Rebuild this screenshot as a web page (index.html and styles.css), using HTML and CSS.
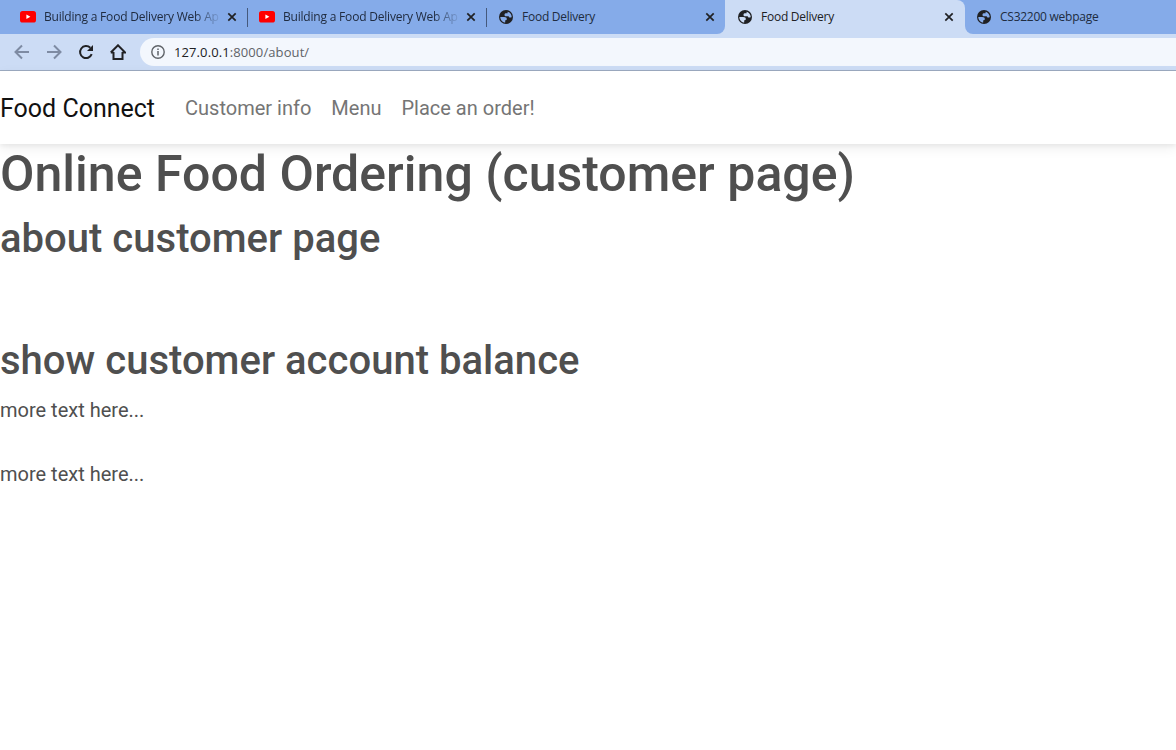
FILE: index.html
```html
<!DOCTYPE html>
<html lang="en">
<head>
<meta charset="utf-8">
<title>Food Delivery</title>
<link rel="stylesheet" href="styles.css">
</head>
<body>
<svg class="sprite" aria-hidden="true">
  <symbol id="youtube" viewBox="0 0 16 12"><rect width="16" height="11.5" rx="2.6" fill="#f00"/><path d="M6.4 3.4v4.700l4-2.350z" fill="#fff"/></symbol>
  <symbol id="globe" viewBox="0 0 14 14"><circle cx="7" cy="7" r="7" fill="#202124"/><path d="M8.600 1.700C11 2.400 12.700 4.500 12.700 7C12.400 7.400 11.900 7.600 11.300 7.600C10.200 7.600 9.900 7 9.700 6.300H7.200C6 6.300 5.500 5.600 5.500 4.700C5.500 3.700 6.300 3.300 7.300 3.300H8.600ZM1.300 7H5.200C7 7 7.800 7.700 7.800 8.900C7.800 9.900 7.100 10.300 6.200 10.300V12.600C3.400 12.300 1.300 9.900 1.300 7Z" fill="currentColor"/></symbol>
  <symbol id="close" viewBox="0 0 10 10"><path d="M1.300 1.300l7.400 7.400M8.700 1.300L1.300 8.700" stroke="#202124" stroke-width="1.700"/></symbol>
</svg>
<header class="browser">
  <div class="tabs">
    <div class="tab"><svg class="icon-video"><use href="#youtube"/></svg><span class="title fade">Building a Food Delivery Web Ap</span><svg class="close"><use href="#close"/></svg></div>
    <div class="tab divided"><svg class="icon-video"><use href="#youtube"/></svg><span class="title fade">Building a Food Delivery Web Ap</span><svg class="close"><use href="#close"/></svg></div>
    <div class="tab divided"><svg class="icon-globe"><use href="#globe"/></svg><span class="title">Food Delivery</span><svg class="close"><use href="#close"/></svg></div>
    <div class="tab active"><svg class="icon-globe"><use href="#globe"/></svg><span class="title">Food Delivery</span><svg class="close"><use href="#close"/></svg></div>
    <div class="tab last"><svg class="icon-globe"><use href="#globe"/></svg><span class="title">CS32200 webpage</span></div>
  </div>
  <div class="toolbar">
    <svg class="tool" viewBox="0 0 16 16"><path d="M15 8H2M8 1.500L1.500 8L8 14.500" fill="none" stroke="#7e8ba3" stroke-width="2"/></svg>
    <svg class="tool" viewBox="0 0 16 16"><path d="M1 8h13M8 1.500L14.500 8L8 14.500" fill="none" stroke="#7e8ba3" stroke-width="2"/></svg>
    <svg class="tool" viewBox="0 0 16 16"><path d="M13.700 10.200A6 6 0 1 1 12.300 3.800" fill="none" stroke="#202124" stroke-width="2"/><path d="M15 1v6H9z" fill="#202124"/></svg>
    <svg class="tool" viewBox="0 0 16 16"><path d="M3.500 8v7h9V8M.8 8.500L8 1.300l7.200 7.200h-2.700M.8 8.500h2.700" fill="none" stroke="#202124" stroke-width="2"/></svg>
    <div class="address">
      <svg class="info" viewBox="0 0 14 14"><circle cx="7" cy="7" r="6.200" fill="none" stroke="#5f6368" stroke-width="1.400"/><path d="M7 6v4.500M7 3.500V5" stroke="#5f6368" stroke-width="1.500"/></svg>
      <span class="url">127.0.0.1<span class="path">:8000/about/</span></span>
    </div>
  </div>
</header>
<nav class="navbar">
  <a class="brand">Food Connect</a>
  <a class="link">Customer info</a>
  <a class="link">Menu</a>
  <a class="link">Place an order!</a>
</nav>
<main>
  <h1>Online Food Ordering (customer page)</h1>
  <h2>about customer page</h2>
  <br><br>
  <h2>show customer account balance</h2>
  <p>more text here...</p>
  <br>
  <p>more text here...</p>
</main>
</body>
</html>
```
FILE: styles.css
```css
* { box-sizing: border-box; }
body { margin: 0; height: 750px; overflow: hidden; background: #fff; color: #4f4f4f; font: 400 20px/32px Roboto, sans-serif; }
.sprite { display: none; }
.browser { height: 71px; background: #ccdcf5; border-bottom: 1px solid #9dabc1; font-family: "Open Sans", "Noto Sans", sans-serif; }
.tabs { display: flex; height: 34px; padding-left: 8px; background: linear-gradient(#85abe9, #85abe9) 0 0 / 725px 26px no-repeat, linear-gradient(#85abe9, #85abe9) 0 0 / 717px 34px no-repeat, linear-gradient(#85abe9, #85abe9) 957px 0 / 219px 26px no-repeat, #ccdcf5; overflow: hidden; }
.tab { display: flex; align-items: center; flex: none; width: 239px; height: 34px; padding: 0 10px 0 12px; background: #85abe9; color: #202c40; font-size: 12px; line-height: 18px; }
.divided { background: linear-gradient(#45597c, #45597c) 0 8px / 1px 19px no-repeat #85abe9; }
.tab:nth-child(3) { border-bottom-right-radius: 8px; }
.active { width: 240px; padding-right: 11px; background: #ccdcf5; border-radius: 8px 8px 0 0; color: #202124; }
.last { width: 220px; border-bottom-left-radius: 8px; padding-left: 12px; }
.icon-video { width: 16px; height: 12px; margin-right: 8px; flex: none; }
.icon-globe { width: 14px; height: 14px; margin: 0 8px 0 1px; flex: none; color: #85abe9; }
.active .icon-globe { color: #ccdcf5; }
.title { flex: none; padding-left: 1px; white-space: nowrap; letter-spacing: -.25px; }
.last .icon-globe { margin-left: 0; }
.fade { padding-left: 0; letter-spacing: -.2px; -webkit-mask-image: linear-gradient(90deg, #000 150px, transparent 178px); mask-image: linear-gradient(90deg, #000 150px, transparent 178px); }
.close { width: 10px; height: 10px; flex: none; margin-left: auto; }
.toolbar { display: flex; align-items: center; height: 36px; padding-left: 14px; gap: 16px; }
.tool { width: 16px; height: 16px; flex: none; }
.address { display: flex; align-items: center; flex: 1; height: 28px; margin-left: -2px; padding-left: 11px; border-radius: 14px 0 0 14px; background: #f3f7fd; }
.info { width: 14px; height: 14px; }
.url { margin-left: 9px; color: #202124; font-size: 13px; line-height: 20px; letter-spacing: .1px; }
.path { color: #5f6368; }
.navbar { position: relative; display: flex; align-items: center; height: 73px; padding-top: 2px; background: #fff; box-shadow: 0 4px 12px rgba(0,0,0,.07), 0 2px 4px rgba(0,0,0,.05); }
.brand { margin-right: 30px; color: #111; font-size: 25px; }
.link { margin-right: 20px; padding-bottom: 2px; color: #757575; }
h1, h2, p { margin: 0; }
h1, h2 { margin-bottom: 10px; font-weight: 500; line-height: 1.2; }
h1 { position: relative; font-size: 50px; letter-spacing: .02px; }
h2 { padding-top: 1px; margin-bottom: 9px; font-size: 40px; letter-spacing: .02px; }
```
